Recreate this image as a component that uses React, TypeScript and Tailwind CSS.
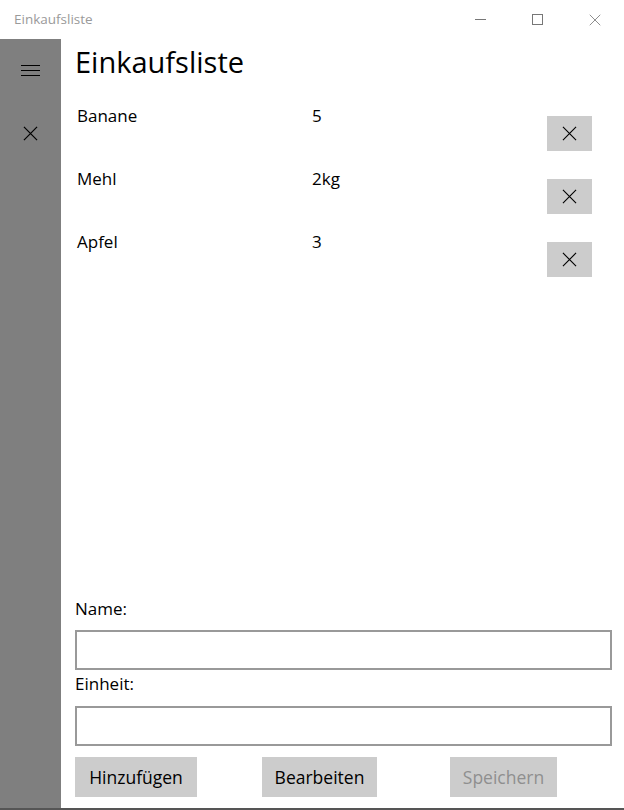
import React from 'react';

const items = [
    { name: 'Banane', amount: '5' },
    { name: 'Mehl', amount: '2kg' },
    { name: 'Apfel', amount: '3' },
];

const XIcon = ({ size = 16, stroke = '#000', width = 1.2 }: { size?: number; stroke?: string; width?: number }) => (
    <svg width={size} height={size} viewBox="0 0 16 16" fill="none">
        <path d="M1 1L15 15M15 1L1 15" stroke={stroke} strokeWidth={width} />
    </svg>
);

const App = () => {
    return (
        <div className="w-[624px] h-[810px] flex flex-col bg-white overflow-hidden" style={{ fontFamily: '"Open Sans", "Noto Sans", sans-serif' }}>
            {/* title bar */}
            <div className="h-[39px] flex items-center shrink-0">
                <span className="pl-[14px] text-[13.5px] text-[#9a9a9a] flex-1">Einkaufsliste</span>
                <div className="flex items-center h-full">
                    <div className="w-[57px] h-full flex items-center justify-center">
                        <div className="w-[11px] h-px bg-[#777]" />
                    </div>
                    <div className="w-[57px] h-full flex items-center justify-center">
                        <div className="w-[11px] h-[11px] border border-[#777]" />
                    </div>
                    <div className="w-[57px] h-full flex items-center justify-center mr-[1px]">
                        <XIcon size={12} stroke="#777" width={1.1} />
                    </div>
                </div>
            </div>

            <div className="flex flex-1 border-b-2 border-[#555]">
                {/* side pane */}
                <div className="w-[61px] bg-[#7f7f7f] shrink-0 flex flex-col items-center">
                    <div className="mt-[26px] flex flex-col gap-[4px]">
                        <div className="w-[19px] h-px bg-black" />
                        <div className="w-[19px] h-px bg-black" />
                        <div className="w-[19px] h-px bg-black" />
                    </div>
                    <div className="mt-[50px]">
                        <XIcon size={15} width={1.3} />
                    </div>
                </div>

                {/* main */}
                <div className="flex-1 flex flex-col pl-[14px] pr-[12px] text-black">
                    <h1 className="text-[29px] leading-[40px] mt-[3px]">Einkaufsliste</h1>
                    <div className="flex flex-col mt-[22px]">
                        {items.map((item) => (
                            <div key={item.name} className="flex items-start h-[63px]">
                                <span className="w-[237px] pl-[2px] text-[17px] leading-[24px]">{item.name}</span>
                                <span className="flex-1 text-[17px] leading-[24px]">{item.amount}</span>
                                <button className="w-[45px] h-[35px] mt-[12px] mr-[20px] bg-[#cccccc] flex items-center justify-center">
                                    <XIcon size={15} width={1.2} />
                                </button>
                            </div>
                        ))}
                    </div>

                    <div className="flex-1" />

                    <div className="flex flex-col pb-[11px]">
                        <label className="text-[17px] leading-[22px]">Name:</label>
                        <input className="mt-[10px] h-[40px] w-full border-2 border-[#999] outline-none" />
                        <label className="text-[17px] leading-[22px] mt-[3px]">Einheit:</label>
                        <input className="mt-[11px] h-[40px] w-full border-2 border-[#999] outline-none" />
                        <div className="flex mt-[11px]">
                            <button className="w-[122px] h-[40px] bg-[#cccccc] text-[17.5px]">Hinzufügen</button>
                            <button className="w-[115px] h-[40px] ml-[65px] bg-[#cccccc] text-[17.5px]">Bearbeiten</button>
                            <button className="w-[107px] h-[40px] ml-[73px] bg-[#cccccc] text-[17.5px] text-[#8f8f8f]">Speichern</button>
                        </div>
                    </div>
                </div>
            </div>
        </div>
    );
};

export default App;
